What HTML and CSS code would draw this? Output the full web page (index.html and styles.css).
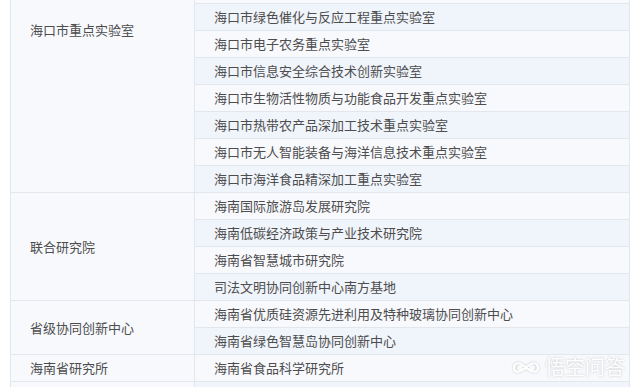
FILE: index.html
```html
<!DOCTYPE html>
<html lang="zh-CN">
<head>
<meta charset="utf-8">
<link rel="stylesheet" href="styles.css">
</head>
<body>
<div class="page">
  <table class="labs">
    <colgroup><col class="c1"><col class="c2"></colgroup>
    <tbody>
      <tr class="even"><td class="group first" rowspan="8">海口市重点实验室</td><td>&nbsp;</td></tr>
      <tr class="odd"><td>海口市绿色催化与反应工程重点实验室</td></tr>
      <tr class="even"><td>海口市电子农务重点实验室</td></tr>
      <tr class="odd"><td>海口市信息安全综合技术创新实验室</td></tr>
      <tr class="even"><td>海口市生物活性物质与功能食品开发重点实验室</td></tr>
      <tr class="odd"><td>海口市热带农产品深加工技术重点实验室</td></tr>
      <tr class="even"><td>海口市无人智能装备与海洋信息技术重点实验室</td></tr>
      <tr class="odd"><td>海口市海洋食品精深加工重点实验室</td></tr>
      <tr class="even"><td class="group" rowspan="4">联合研究院</td><td>海南国际旅游岛发展研究院</td></tr>
      <tr class="odd"><td>海南低碳经济政策与产业技术研究院</td></tr>
      <tr class="even"><td>海南省智慧城市研究院</td></tr>
      <tr class="odd"><td>司法文明协同创新中心南方基地</td></tr>
      <tr class="even"><td class="group" rowspan="2">省级协同创新中心</td><td>海南省优质硅资源先进利用及特种玻璃协同创新中心</td></tr>
      <tr class="odd"><td>海南省绿色智慧岛协同创新中心</td></tr>
      <tr class="even"><td class="group">海南省研究所</td><td>海南省食品科学研究所</td></tr>
      <tr class="odd"><td class="group">&nbsp;</td><td>&nbsp;</td></tr>
    </tbody>
  </table>
  <div class="watermark">
    <svg class="wm-logo" width="30" height="16" viewBox="0 0 30 16">
      <g fill="none" stroke="#ffffff" stroke-width="2.2" stroke-linecap="round">
        <path d="M3 9 C3 4.5 7 3.5 10 5 C12.5 6.3 13 8 15 8 C17 8 17.5 6.3 20 5 C23 3.5 27 4.5 27 9 C27 12.5 23.5 13.5 20.5 12 C18 10.8 17 9.5 15 9.5 C13 9.5 12 10.8 9.5 12 C6.5 13.5 3 12.5 3 9 Z"/>
        <circle cx="9" cy="9" r="1.6"/>
        <circle cx="21" cy="9" r="1.6"/>
      </g>
    </svg>
    <span class="wm-text">悟空问答</span>
  </div>
</div>
</body>
</html>
```
FILE: styles.css
```css
html, body {
  margin: 0;
  padding: 0;
  background: #ffffff;
}
body {
  font-family: "Noto Sans CJK SC", "Noto Sans", sans-serif;
  font-size: 13px;
  color: #4d4d4d;
}
.page {
  position: relative;
  width: 640px;
  height: 387px;
  overflow: hidden;
}
.labs {
  border-collapse: collapse;
  margin-top: -24px;
  margin-left: 10px;
  width: 619px;
  table-layout: fixed;
}
.c1 { width: 184px; }
.c2 { width: 435px; }
.labs td {
  height: 26px;
  line-height: 26px;
  padding: 0 0 0 19px;
  border: 1px solid #e2e7ee;
  white-space: nowrap;
  overflow: hidden;
}
.labs tr.odd td { background: #f0f4fb; }
.labs tr.even td { background: #f8f9fd; }
.labs tr td.group {
  background: #f7f9fd;
  vertical-align: middle;
}
.labs td.group.first {
  vertical-align: top;
  padding-top: 40px;
}
.watermark {
  position: absolute;
  left: 511px;
  top: 355px;
  display: flex;
  align-items: center;
  gap: 4px;
  opacity: 0.9;
  filter: drop-shadow(0 0 1px rgba(140,140,140,0.5));
}
.wm-logo { display: block; }
.wm-text {
  font-size: 20px;
  line-height: 24px;
  color: #ffffff;
}
```
